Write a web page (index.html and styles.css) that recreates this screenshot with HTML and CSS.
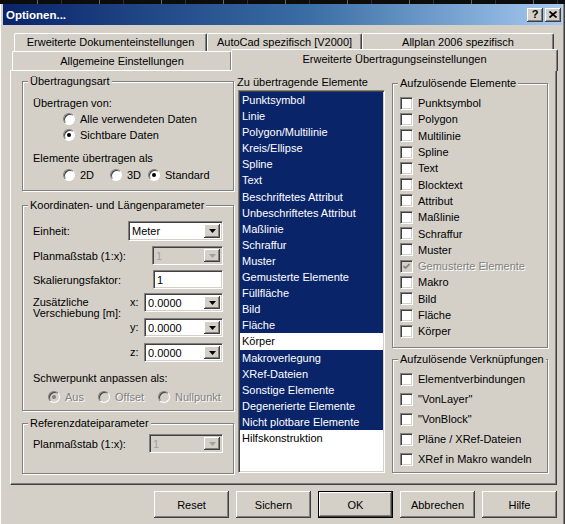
FILE: index.html
```html
<!DOCTYPE html>
<html lang="de">
<head>
<meta charset="utf-8">
<title>Optionen...</title>
<link rel="stylesheet" href="styles.css">
</head>
<body>
<div class="window">
  <div class="noise"></div>
  <div class="titlebar">
    <span class="title">Optionen...</span>
    <div class="caption-btns">
      <span class="cbtn">?</span>
      <span class="cbtn"><svg width="8" height="7" viewBox="0 0 8 7"><path d="M0.5 0.5L7.5 6.5M7.5 0.5L0.5 6.5" stroke="#000" stroke-width="1.7" fill="none"/></svg></span>
    </div>
  </div>

  <div class="tabs">
    <div class="tabrow back">
      <div class="tab t1">Erweiterte Dokumenteinstellungen</div>
      <div class="tab t2">AutoCad spezifisch [V2000]</div>
      <div class="tab t3">Allplan 2006 spezifisch</div>
    </div>
    <div class="tabrow front">
      <div class="tab t4">Allgemeine Einstellungen</div>
      <div class="tab active">Erweiterte Übertragungseinstellungen</div>
    </div>
  </div>

  <div class="panel">
    <div class="col col-left">
      <div class="group g1">
        <div class="legend"><span>Übertragungsart</span></div>
        <div class="line l-von">Übertragen von:</div>
        <div class="opt ind1"><span class="radio"></span>Alle verwendeten Daten</div>
        <div class="opt ind1"><span class="radio on"></span>Sichtbare Daten</div>
        <div class="line l-als">Elemente übertragen als</div>
        <div class="optrow ind1">
          <span class="opt w47"><span class="radio"></span>2D</span>
          <span class="opt w38"><span class="radio"></span>3D</span>
          <span class="opt"><span class="radio on"></span>Standard</span>
        </div>
      </div>

      <div class="group g2">
        <div class="legend"><span>Koordinaten- und Längenparameter</span></div>
        <div class="row r1">
          <span>Einheit:</span>
          <div class="combo c-unit h20"><span class="val">Meter</span><span class="drop"><svg width="7" height="4" viewBox="0 0 7 4"><path d="M0 0H7L3.5 4Z" fill="#000"/></svg></span></div>
        </div>
        <div class="row r2">
          <span>Planmaßstab (1:x):</span>
          <div class="combo c-scale disabled"><span class="val">1</span><span class="drop"><svg width="7" height="4" viewBox="0 0 7 4"><path d="M0 0H7L3.5 4Z" fill="#a0a0a0"/></svg></span></div>
        </div>
        <div class="row r3">
          <span>Skalierungsfaktor:</span>
          <div class="field c-factor"><span class="val">1</span></div>
        </div>
        <div class="offs">
          <div class="offs-label">Zusätzliche<br>Verschiebung [m]:</div>
          <div class="axis">x:</div>
          <div class="combo"><span class="val">0.0000</span><span class="drop"><svg width="7" height="4" viewBox="0 0 7 4"><path d="M0 0H7L3.5 4Z" fill="#000"/></svg></span></div>
          <div class="axis">y:</div>
          <div class="combo"><span class="val">0.0000</span><span class="drop"><svg width="7" height="4" viewBox="0 0 7 4"><path d="M0 0H7L3.5 4Z" fill="#000"/></svg></span></div>
          <div class="axis">z:</div>
          <div class="combo"><span class="val">0.0000</span><span class="drop"><svg width="7" height="4" viewBox="0 0 7 4"><path d="M0 0H7L3.5 4Z" fill="#000"/></svg></span></div>
        </div>
        <div class="line l-sp">Schwerpunkt anpassen als:</div>
        <div class="optrow ind2 dis">
          <span class="opt w50"><span class="radio on disabled"></span>Aus</span>
          <span class="opt w60"><span class="radio disabled"></span>Offset</span>
          <span class="opt"><span class="radio disabled"></span>Nullpunkt</span>
        </div>
      </div>

      <div class="group g3">
        <div class="legend"><span>Referenzdateiparameter</span></div>
        <div class="row r4">
          <span>Planmaßstab (1:x):</span>
          <div class="combo c-ref disabled"><span class="val">1</span><span class="drop"><svg width="7" height="4" viewBox="0 0 7 4"><path d="M0 0H7L3.5 4Z" fill="#a0a0a0"/></svg></span></div>
        </div>
      </div>
    </div>

    <div class="col col-mid">
      <div class="list-label">Zu übertragende Elemente</div>
      <div class="listbox">
        <div class="item sel">Punktsymbol</div>
        <div class="item sel">Linie</div>
        <div class="item sel">Polygon/Multilinie</div>
        <div class="item sel">Kreis/Ellipse</div>
        <div class="item sel">Spline</div>
        <div class="item sel">Text</div>
        <div class="item sel">Beschriftetes Attribut</div>
        <div class="item sel">Unbeschriftetes Attribut</div>
        <div class="item sel">Maßlinie</div>
        <div class="item sel">Schraffur</div>
        <div class="item sel">Muster</div>
        <div class="item sel">Gemusterte Elemente</div>
        <div class="item sel">Füllfläche</div>
        <div class="item sel">Bild</div>
        <div class="item sel">Fläche</div>
        <div class="item">Körper</div>
        <div class="item sel">Makroverlegung</div>
        <div class="item sel">XRef-Dateien</div>
        <div class="item sel">Sonstige Elemente</div>
        <div class="item sel">Degenerierte Elemente</div>
        <div class="item sel">Nicht plotbare Elemente</div>
        <div class="item">Hilfskonstruktion</div>
      </div>
    </div>

    <div class="col col-right">
      <div class="group gA">
        <div class="legend"><span>Aufzulösende Elemente</span></div>
        <div class="checks">
          <div class="chk"><span class="box"></span>Punktsymbol</div>
          <div class="chk"><span class="box"></span>Polygon</div>
          <div class="chk"><span class="box"></span>Multilinie</div>
          <div class="chk"><span class="box"></span>Spline</div>
          <div class="chk"><span class="box"></span>Text</div>
          <div class="chk"><span class="box"></span>Blocktext</div>
          <div class="chk"><span class="box"></span>Attribut</div>
          <div class="chk"><span class="box"></span>Maßlinie</div>
          <div class="chk"><span class="box"></span>Schraffur</div>
          <div class="chk"><span class="box"></span>Muster</div>
          <div class="chk dis"><span class="box disabled"><svg width="7" height="7" viewBox="0 0 7 7"><path d="M0.5 3L2.5 5L6.5 1" stroke="#808080" stroke-width="1.7" fill="none"/></svg></span>Gemusterte Elemente</div>
          <div class="chk"><span class="box"></span>Makro</div>
          <div class="chk"><span class="box"></span>Bild</div>
          <div class="chk"><span class="box"></span>Fläche</div>
          <div class="chk"><span class="box"></span>Körper</div>
        </div>
      </div>
      <div class="group gB">
        <div class="legend"><span>Aufzulösende Verknüpfungen</span></div>
        <div class="checks">
          <div class="chk tall"><span class="box"></span>Elementverbindungen</div>
          <div class="chk tall"><span class="box"></span>"VonLayer"</div>
          <div class="chk tall"><span class="box"></span>"VonBlock"</div>
          <div class="chk tall"><span class="box"></span>Pläne / XRef-Dateien</div>
          <div class="chk tall"><span class="box"></span>XRef in Makro wandeln</div>
        </div>
      </div>
    </div>
  </div>

  <div class="buttons">
    <div class="btn">Reset</div>
    <div class="btn">Sichern</div>
    <div class="btn default">OK</div>
    <div class="btn">Abbrechen</div>
    <div class="btn">Hilfe</div>
  </div>
</div>
</body>
</html>
```

FILE: styles.css
```css
* { box-sizing: border-box; }
html, body { margin: 0; padding: 0; }
body {
  font: 11px "Liberation Sans", Arial, sans-serif;
  color: #000;
  background: #d4d0c8;
}

.window {
  width: 565px;
  height: 524px;
  overflow: hidden;
  background: #d4d0c8;
  padding: 0 3px;
  box-shadow: inset 1px 0 0 #fff, inset -1px 0 0 #404040, inset -2px 0 0 #808080;
}

.noise {
  height: 4px;
  margin: 0 -3px;
  background: #0c0c0c repeating-linear-gradient(90deg, #0c0c0c 0 37px, #6a6a6a 37px 38px, #0c0c0c 38px 61px, #3a2a40 61px 62px);
}

/* title bar */
.titlebar {
  height: 21px;
  display: flex;
  align-items: center;
  justify-content: space-between;
  padding: 0 1px 0 3px;
  background: linear-gradient(to right, #0a246a 0%, #3a6ea5 55%, #a6caf0 100%);
  color: #fff;
}
.title { font-weight: bold; font-size: 11.5px; }
.caption-btns { display: flex; gap: 2px; }
.cbtn {
  width: 16px;
  height: 14px;
  display: grid;
  place-items: center;
  background: #d4d0c8;
  color: #000;
  font-weight: bold;
  font-size: 11px;
  line-height: 1;
  box-shadow: inset -1px -1px 0 #404040, inset 1px 1px 0 #fff, inset -2px -2px 0 #808080;
}

/* tabs */
.tabs { margin-top: 8px; }
.tabrow { display: flex; }
.tabrow.back { height: 18px; margin-left: 11px; }
.tabrow.front { height: 19px; margin-left: 9px; align-items: flex-end; }
.tab {
  height: 100%;
  text-align: center;
  line-height: 17px;
  white-space: nowrap;
  background: #d4d0c8;
  border-top: 1px solid #fff;
  border-left: 1px solid #fff;
  border-right: 1px solid #404040;
  border-radius: 2px 2px 0 0;
  box-shadow: inset -1px 0 0 #808080;
}
.t1 { width: 193px; }
.t2 { width: 155px; }
.t3 { width: 192px; }
.t4 { width: 220px; line-height: 18px; }
.tab.active {
  width: 327px;
  height: 22px;
  margin-left: -1px;
  margin-bottom: -1px;
  line-height: 19px;
  position: relative;
  z-index: 1;
}

/* panel */
.panel {
  margin-left: 7px;
  width: 547px;
  height: 415px;
  border: 1px solid;
  border-color: #fff #404040 #404040 #fff;
  box-shadow: inset -1px -1px 0 #808080;
  padding: 4px 8px 0 11px;
  display: flex;
  align-items: flex-start;
}
.col { display: flex; flex-direction: column; }
.col-left { width: 212px; }
.col-mid { width: 147px; margin-left: 4px; }
.col-right { width: 156px; margin-left: 7px; }

/* group boxes */
.group {
  border: 1px solid #808080;
  box-shadow: inset 1px 1px 0 #fff, 1px 1px 0 #fff;
  padding: 0 10px 0 10px;
}
.legend {
  margin: -7px 0 0 -5px;
  height: 13px;
  line-height: 13px;
  white-space: nowrap;
}
.legend span { background: #d4d0c8; padding: 0 2px; }

.g1 { margin-top: 6px; padding-bottom: 7px; }
.g2 { margin-top: 14px; padding-bottom: 5px; }
.g3 { margin-top: 12px; padding-bottom: 20px; }

.line { height: 16px; line-height: 16px; white-space: nowrap; }
.l-von { margin-top: 7px; }
.l-als { margin-top: 7px; }
.l-sp { margin-top: 8px; }

.opt { display: flex; align-items: center; height: 16px; white-space: nowrap; }
.optrow { display: flex; height: 16px; margin-top: 1px; }
.ind1 { padding-left: 30px; }
.ind2 { padding-left: 15px; margin-top: 3px; }
.w47 { width: 47px; }
.w38 { width: 38px; }
.w50 { width: 50px; }
.w60 { width: 60px; }

.radio {
  width: 12px;
  height: 12px;
  flex: none;
  margin-right: 5px;
  border-radius: 50%;
  border: 1px solid;
  border-color: #808080 #fff #fff #808080;
  background: #fff;
  box-shadow: inset 1px 1px 0 #404040;
  display: grid;
  place-items: center;
}
.radio.on::after {
  content: "";
  width: 4px;
  height: 4px;
  border-radius: 50%;
  background: #000;
}
.radio.disabled { background: #d4d0c8; }
.radio.disabled.on::after { background: #808080; }
.dis { color: #808080; text-shadow: 1px 1px 0 #fff; }

/* rows with fields */
.row { display: flex; align-items: center; justify-content: space-between; white-space: nowrap; }
.r1 { margin-top: 9px; }
.r2 { margin-top: 5px; }
.r3 { margin-top: 5px; }
.r4 { margin-top: 4px; }

.combo, .field {
  height: 19px;
  display: flex;
  align-items: stretch;
  background: #fff;
  border: 1px solid;
  border-color: #808080 #fff #fff #808080;
  box-shadow: inset 1px 1px 0 #404040, inset -1px -1px 0 #d4d0c8;
  padding: 2px;
}
.combo.h20 { height: 20px; }
.val { flex: 1; line-height: 15px; padding-left: 1px; white-space: nowrap; overflow: hidden; }
.drop {
  width: 16px;
  flex: none;
  display: grid;
  place-items: center;
  background: #d4d0c8;
  box-shadow: inset -1px -1px 0 #404040, inset 1px 1px 0 #fff, inset -2px -2px 0 #808080;
}
.combo.disabled { background: #d4d0c8; }
.combo.disabled .val { color: #a0a0a0; }
.c-unit { width: 95px; }
.c-scale { width: 71px; }
.c-factor { width: 70px; }
.c-ref { width: 74px; }

.offs {
  margin-top: 4px;
  display: grid;
  grid-template-columns: 1fr 14px 79px;
  grid-template-rows: 19px 19px 19px;
  row-gap: 6px;
}
.offs-label { grid-row: 1 / 4; grid-column: 1; line-height: 11px; padding-top: 4px; }
.axis { line-height: 19px; }

/* list */
.list-label { height: 14px; line-height: 14px; margin-left: -1px; white-space: nowrap; }
.listbox {
  margin-top: 1px;
  height: 383px;
  background: #fff;
  border: 1px solid;
  border-color: #808080 #fff #fff #808080;
  box-shadow: inset 1px 1px 0 #404040, inset -1px -1px 0 #d4d0c8;
  padding: 1px;
}
.item { height: 16.1px; line-height: 16px; padding-left: 2px; white-space: nowrap; }
.item.sel { background: #0a246a; color: #fff; }

/* right groups */
.col-right .group { padding: 0 7px; }
.col-right .legend { margin-left: -2px; }
.gA { margin-top: 8px; padding-bottom: 8px !important; }
.gB { margin-top: 11px; padding-bottom: 3px !important; }
.gA .checks { margin-top: 5px; }
.gB .checks { margin-top: 3px; }
.chk { display: flex; align-items: center; height: 16.3px; white-space: nowrap; }
.chk.tall { height: 20px; }
.box {
  width: 13px;
  height: 13px;
  flex: none;
  margin-right: 5px;
  background: #fff;
  border: 1px solid;
  border-color: #808080 #fff #fff #808080;
  box-shadow: inset 1px 1px 0 #404040, inset -1px -1px 0 #d4d0c8;
  display: grid;
  place-items: center;
}
.box.disabled { background: #d4d0c8; }

/* buttons */
.buttons {
  display: flex;
  justify-content: flex-end;
  gap: 7px;
  margin-top: 6px;
  margin-right: 5px;
}
.btn {
  width: 75px;
  height: 27px;
  display: grid;
  place-items: center;
  background: #d4d0c8;
  box-shadow: inset -1px -1px 0 #404040, inset 1px 1px 0 #fff, inset -2px -2px 0 #808080;
}
.btn.default { border: 1px solid #000; }
```
